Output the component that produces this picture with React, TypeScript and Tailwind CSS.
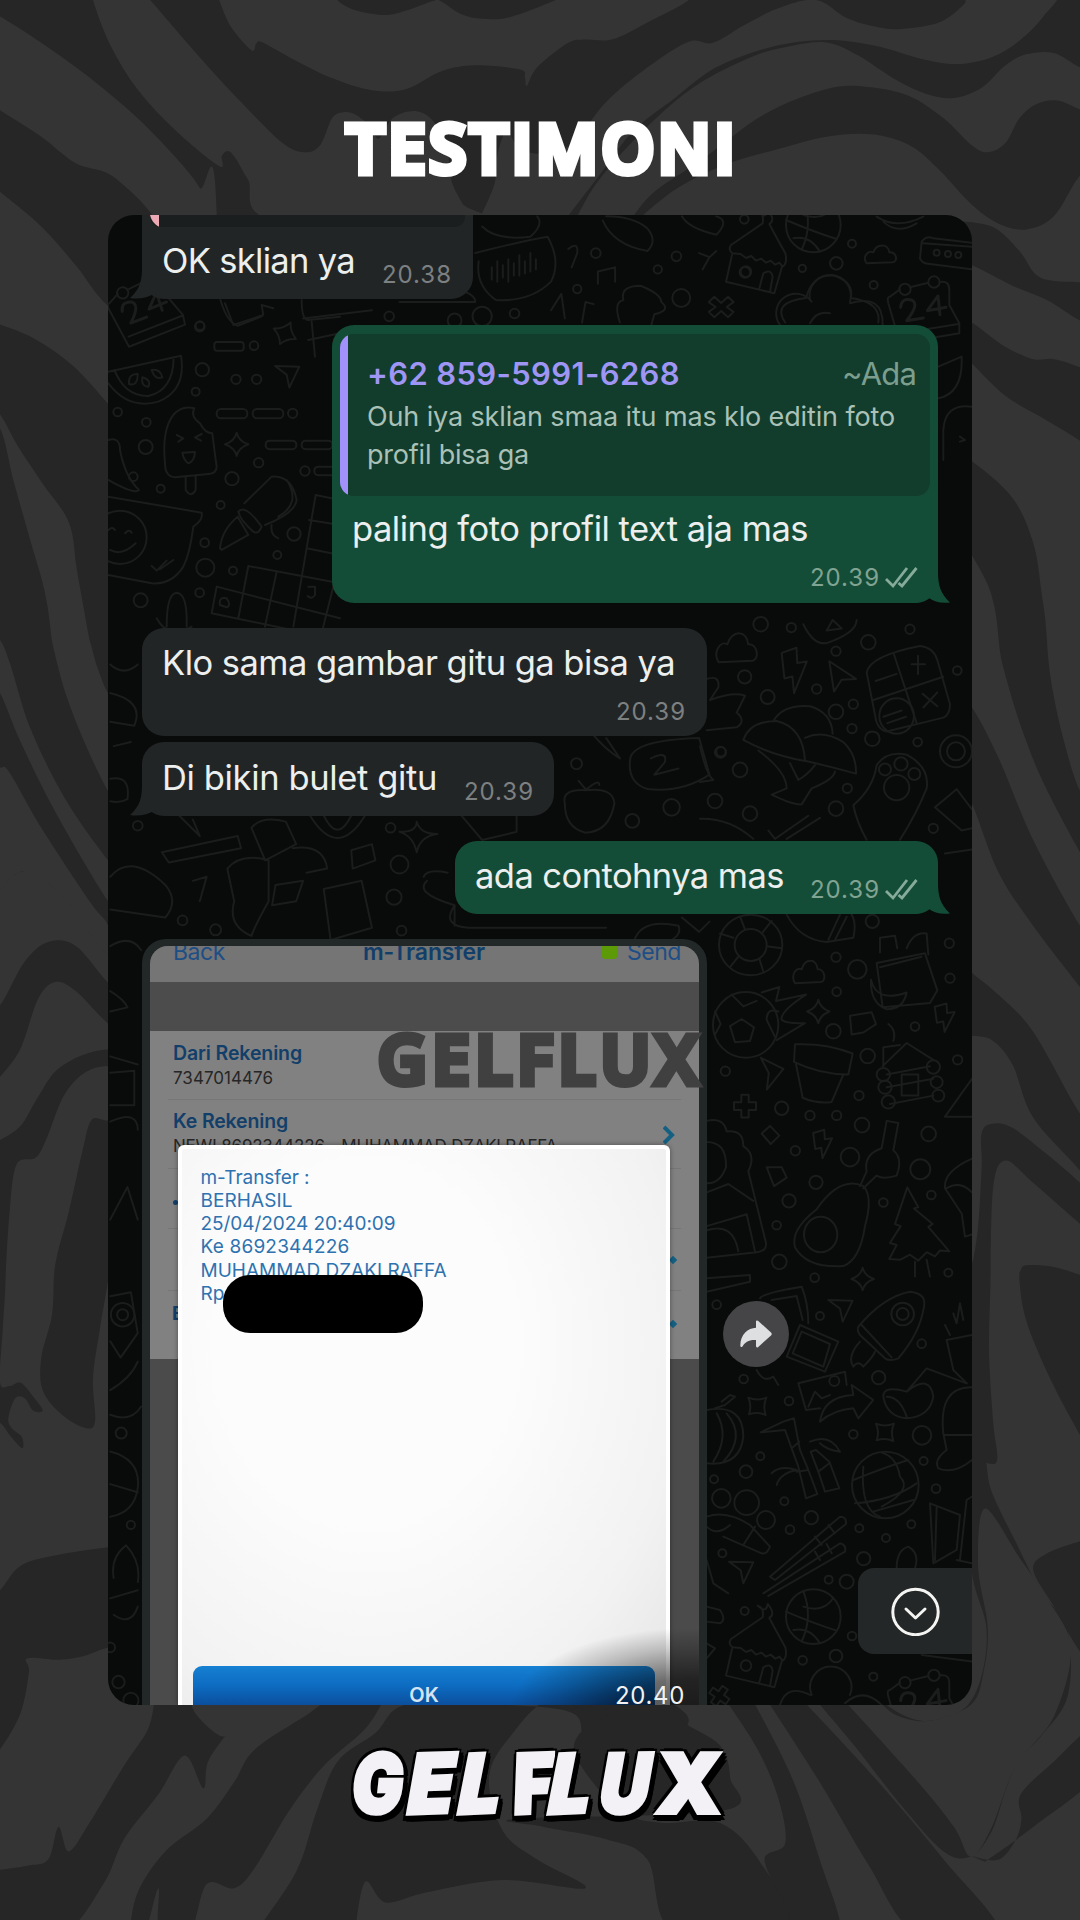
import { useLayoutEffect, useRef, type ReactNode } from "react";

type Pt = [number, number];

/* Closed or open smooth curve through a flat list of coordinates. */
function curve(flat: number[], close = true): string {
  const p: Pt[] = [];
  for (let i = 0; i < flat.length; i += 2) p.push([flat[i], flat[i + 1]]);
  const n = p.length;
  let d = `M${p[0][0]} ${p[0][1]}`;
  for (let i = 0; i < n - 1; i++) {
    const a = p[Math.max(0, i - 1)];
    const b = p[i];
    const c = p[i + 1];
    const e = p[Math.min(n - 1, i + 2)];
    d += `C${b[0] + (c[0] - a[0]) / 6} ${b[1] + (c[1] - a[1]) / 6} ${c[0] - (e[0] - b[0]) / 6} ${c[1] - (e[1] - b[1]) / 6} ${c[0]} ${c[1]}`;
  }
  return close ? d + "Z" : d;
}

const LIGHT = "#343434";
const DARK = "#262626";

const topWaves: [string, number[]][] = [
  [LIGHT, [-30, 10, 0, 40, 60, 105, 130, 190, 200, 290, 260, 395, 290, 460, 315, 540, 315, 2000, -30, 2000]],
  [LIGHT, [135, -30, 135, 0, 160, 110, 200, 220, 255, 320, 318, 407, 322, 382, 331, 370, 342, 388, 360, 440, 400, 540, 690, 540, 672, 500, 655, 440, 648, 350, 625, 290, 600, 272, 570, 290, 550, 340, 538, 310, 515, 280, 498, 275, 482, 290, 465, 355, 442, 373, 410, 350, 350, 250, 290, 140, 218, 0, 200, -30]],
  [LIGHT, [310, -30, 318, 0, 335, 65, 365, 123, 372, 107, 380, 103, 420, 140, 480, 190, 540, 221, 590, 218, 640, 175, 690, 160, 755, 170, 762, 190, 765, 210, 780, 165, 825, 105, 850, 97, 890, 96, 940, 55, 1000, 0, 1000, -30]],
  [DARK, [480, -20, 495, 8, 520, 27, 560, 37, 590, 26, 630, 2, 640, 3, 670, 35, 700, 46, 740, 42, 800, 5, 830, -20]],
  [LIGHT, [695, 540, 718, 450, 722, 380, 735, 320, 748, 350, 768, 373, 800, 374, 835, 345, 880, 250, 940, 165, 1000, 102, 1035, 105, 1080, 62, 1130, 20, 1185, 0, 1230, 45, 1275, 67, 1310, 71, 1365, 54, 1400, 10, 1410, -20, 1530, -20, 1515, 40, 1480, 100, 1440, 140, 1390, 157, 1340, 145, 1270, 112, 1200, 98, 1120, 115, 1040, 165, 980, 240, 920, 320, 870, 430, 820, 540]],
  [LIGHT, [835, 540, 870, 440, 940, 310, 1010, 210, 1090, 140, 1150, 112, 1200, 104, 1245, 135, 1300, 195, 1345, 230, 1385, 240, 1425, 215, 1460, 160, 1490, 133, 1530, 130, 1568, 165, 1600, 180, 1600, 290, 1568, 268, 1535, 246, 1505, 255, 1480, 290, 1460, 350, 1435, 373, 1410, 355, 1370, 290, 1320, 235, 1260, 213, 1200, 218, 1110, 280, 1020, 390, 950, 470, 915, 540]],
  [LIGHT, [925, 540, 980, 465, 1050, 405, 1130, 365, 1200, 335, 1265, 329, 1320, 355, 1360, 410, 1410, 500, 1450, 548, 1490, 562, 1530, 530, 1568, 430, 1600, 400, 1600, 2000, 925, 2000]],
  [DARK, [1380, 540, 1440, 555, 1480, 615, 1510, 680, 1568, 692, 1600, 700, 1600, 800, 1568, 785, 1520, 735, 1470, 700, 1411, 650, 1380, 640]],
  [DARK, [1380, 760, 1411, 790, 1460, 850, 1500, 880, 1530, 880, 1568, 900, 1600, 930, 1600, 1130, 1568, 1080, 1520, 1030, 1460, 970, 1411, 890]],
  [DARK, [1380, 1110, 1411, 1130, 1470, 1220, 1500, 1330, 1512, 1450, 1520, 1568, 1524, 1800, 1455, 1800, 1450, 1568, 1438, 1450, 1411, 1360]],
  [DARK, [-30, 240, 0, 270, 60, 335, 110, 400, 170, 440, 240, 590, 240, 850, 157, 750, 110, 650, 60, 555, 0, 470, -30, 430]],
  [DARK, [-30, 780, 0, 795, 50, 830, 105, 895, 157, 990, 200, 1080, 200, 1700, 145, 1700, 130, 1568, 112, 1400, 100, 1280, 60, 1180, 25, 1090, 0, 1015, -30, 960]],
  [DARK, [-30, 1030, 0, 1050, 20, 1180, 45, 1330, 65, 1450, 75, 1568, 80, 1700, -30, 1700]],
];

const midWaves: [string, number[]][] = [
  [DARK, [120, -40, 130, 0, 142, 70, 160, 140, 200, 230, 200, -40]],
  [DARK, [-20, -40, 72, -40, 75, 0, 95, 130, 125, 260, 160, 380, 200, 480, 200, 620, 157, 540, 95, 390, 45, 220, 15, 60, 0, 0, -20, -20]],
  [DARK, [-20, 100, 0, 130, 30, 250, 80, 420, 157, 640, 200, 720, 200, 870, 157, 765, 100, 640, 60, 575, 35, 566, 10, 590, -20, 660]],
  [LIGHT, [-20, 300, 0, 312, 14, 325, 60, 460, 130, 640, 157, 700, 157, 770, 100, 650, 60, 580, 35, 566, 14, 585, 0, 615, -20, 650]],
  [DARK, [-20, 890, 0, 895, 35, 790, 70, 740, 110, 750, 157, 840, 200, 900, 200, 990, 157, 940, 110, 860, 80, 838, 55, 880, 30, 1000, 0, 1070, -20, 1100]],
  [DARK, [-20, 1240, 0, 1225, 30, 1190, 55, 1120, 85, 1050, 137, 1008, 200, 1005, 200, 1040, 135, 1050, 95, 1110, 68, 1220, 52, 1268, 24, 1285, 14, 1400, 8, 1568, 8, 1700, -20, 1700]],
  [DARK, [200, 1180, 157, 1178, 133, 1176, 120, 1250, 100, 1400, 84, 1500, 78, 1568, 76, 1700, 200, 1700]],
  [DARK, [1446, -200, 1450, 0, 1462, 100, 1484, 220, 1515, 350, 1568, 520, 1600, 600, 1600, 440, 1568, 370, 1545, 250, 1528, 120, 1520, 0, 1518, -200]],
  [DARK, [1390, 140, 1411, 165, 1450, 290, 1500, 490, 1568, 700, 1600, 760, 1600, 920, 1568, 850, 1500, 700, 1450, 570, 1411, 400, 1390, 350]],
  [DARK, [1390, 780, 1411, 815, 1450, 870, 1500, 960, 1568, 1160, 1600, 1200, 1600, 1380, 1568, 1300, 1500, 1170, 1470, 1040, 1440, 980, 1411, 970]],
  [DARK, [1380, 1700, 1415, 1500, 1425, 1300, 1425, 1210, 1440, 1185, 1470, 1195, 1520, 1260, 1568, 1330, 1600, 1390, 1600, 1470, 1568, 1430, 1500, 1330, 1460, 1275, 1442, 1340, 1438, 1568, 1438, 1700]],
  [DARK, [1482, 1700, 1480, 1568, 1482, 1545, 1490, 1532, 1530, 1536, 1568, 1555, 1600, 1570, 1600, 1700]],
];

const bottomWaves: [string, number[]][] = [
  [DARK, [79, -150, 78, 0, 75, 90, 60, 190, 62, 270, 90, 330, 125, 363, 138, 345, 135, 240, 145, 120, 157, 0, 170, -150]],
  [DARK, [-20, -150, 8, -150, 8, 0, 4, 120, 0, 250, 14, 260, 30, 252, 50, 290, 62, 320, 48, 320, 36, 290, 22, 290, 12, 340, 18, 365, 32, 385, 32, 412, 14, 380, 0, 350, -20, 350]],
  [DARK, [-20, 780, 0, 760, 30, 700, 80, 675, 157, 655, 200, 650, 200, 850, 140, 910, 90, 930, 40, 927, 42, 960, 30, 1060, 0, 1150, -20, 1180]],
  [DARK, [225, 1020, 215, 1100, 180, 1190, 130, 1330, 100, 1400, 85, 1340, 70, 1420, 40, 1435, 0, 1445, -20, 1450, -20, 1600, 90, 1600, 150, 1480, 180, 1370, 230, 1260, 268, 1165, 295, 1245, 302, 1180, 330, 1110, 365, 1030]],
  [LIGHT, [275, 1020, 285, 1065, 322, 1118, 345, 1090, 368, 1020]],
  [DARK, [480, 1020, 450, 1060, 370, 1150, 340, 1230, 300, 1320, 240, 1400, 200, 1500, 190, 1600, 210, 1600, 230, 1490, 232, 1600, 275, 1600, 300, 1480, 340, 1490, 370, 1440, 420, 1300, 470, 1190, 530, 1100, 560, 1020]],
  [DARK, [370, 1600, 430, 1450, 460, 1300, 490, 1180, 545, 1110, 590, 1040, 720, 1040, 830, 1060, 850, 1130, 900, 1190, 960, 1150, 1000, 1080, 970, 1030, 960, 1020, 810, 1020, 740, 1120, 710, 1220, 730, 1350, 780, 1420, 850, 1490, 730, 1470, 620, 1500, 560, 1525, 530, 1475, 515, 1600]],
  [DARK, [810, 1020, 850, 1055, 890, 1055, 840, 1115, 840, 1180, 900, 1300, 960, 1330, 1045, 1330, 1105, 1430, 1150, 1600, 980, 1600, 940, 1420, 880, 1370, 790, 1340, 750, 1320, 1050, 1300, 1060, 1220, 1045, 1140, 990, 1080, 970, 1020]],
  [DARK, [1050, 1020, 1100, 1150, 1130, 1270, 1140, 1380, 1110, 1420, 1140, 1530, 1160, 1600, 1220, 1600, 1190, 1420, 1150, 1220, 1090, 1020]],
  [DARK, [1110, 1020, 1190, 1230, 1260, 1430, 1330, 1600, 1450, 1600, 1370, 1420, 1270, 1220, 1160, 1020]],
  [DARK, [1180, 1020, 1240, 1140, 1310, 1290, 1370, 1400, 1410, 1412, 1440, 1350, 1460, 1250, 1480, 1170, 1510, 1120, 1550, 1020, 1550, 860, 1510, 760, 1480, 660, 1440, 520, 1430, 440, 1410, 420, 1410, 700, 1432, 850, 1425, 970, 1400, 1050, 1350, 1080, 1310, 1065, 1270, 1020]],
  [LIGHT, [1220, 1020, 1330, 1225, 1385, 1340, 1410, 1413, 1440, 1340, 1475, 1190, 1530, 1070, 1555, 900, 1520, 780, 1480, 680, 1430, 560, 1420, 700, 1434, 850, 1428, 960, 1410, 1040, 1350, 1080, 1300, 1065, 1270, 1020]],
  [DARK, [1411, 1412, 1450, 1420, 1475, 1370, 1483, 1320, 1482, 1260, 1530, 1180, 1600, 1080, 1600, 1200, 1500, 1340, 1430, 1425]],
  [DARK, [1478, -150, 1480, 0, 1492, 110, 1530, 260, 1568, 380, 1600, 480, 1600, -150]],
  [DARK, [1380, -150, 1438, -150, 1438, 0, 1436, 180, 1442, 350, 1447, 445, 1420, 440, 1411, 430]],
  [DARK, [1568, 640, 1520, 670, 1500, 710, 1530, 800, 1568, 910, 1600, 960, 1600, 620]],
];

function Waves() {
  return (
    <svg className="absolute inset-0 h-[1920px] w-[1080px]" viewBox="0 0 1080 1920" aria-hidden="true">
      <rect width="1080" height="1920" fill={DARK} />
      <rect y="640" width="1080" height="1280" fill={LIGHT} />
      {[
        { w: topWaves, y: 0 },
        { w: midWaves, y: 640 },
        { w: bottomWaves, y: 1280 },
      ].map(({ w, y }) => (
        <svg key={y} y={y} width="1080" height="640" viewBox="0 0 1568 1568" preserveAspectRatio="none">
          {w.map(([fill, pts], i) => (
            <path key={i} d={curve(pts)} fill={fill} />
          ))}
        </svg>
      ))}
    </svg>
  );
}

function Dots({ list }: { list: [number, number, number][] }) {
  return (
    <>
      {list.map(([x, y, r], i) => (
        <circle key={i} cx={x} cy={y} r={r} />
      ))}
    </>
  );
}

/* Dots for a group that is stretched vertically; keeps them round on screen. */
function RoundDots({ list, ratio }: { list: [number, number, number][]; ratio: number }) {
  return (
    <>
      {list.map(([x, y, r], i) => (
        <ellipse key={i} cx={x} cy={y} rx={r} ry={r * ratio} />
      ))}
    </>
  );
}

const star = "M0-28Q5-8 28 0Q5 8 0 28Q-5 8-28 0Q-5-8 0-28Z";
const spark = "M-27-25Q0-14 27-25Q16 0 25 27Q0 16-25 25Q-16 0-27-25Z";
const plane = "M-35-30L38-28L8 35L0-4Z";
const cloud = "M-40 25C-55 5-35-15-20-8C-10-35 25-35 28-8C50-10 55 20 38 22Z";
const bolt = "M-25-35L12-45L14-15L38-18L6 45L2 12L-18 16Z";
const cross = "M-10-30H10V-10H30V10H10V30H-10V10H-30V-10H-10Z";

function House() {
  return (
    <g>
      <path d="M-70-20Q-85-30-75-45L20-110Q25-140 5-145Q30-120 35-150Q60-120 40-108Q60-70 88-20Q95 10 80 20L70 8L58 14L44 2L30 8L16-4L0 2L-14-12L-30-6L-46-18Z" />
      <path d="M-72-15L-90 65L55 100L78 20M10 85L22 40Q45 25 50 50L42 96" />
      <circle cx="-30" cy="35" r="16" />
    </g>
  );
}

function Ball() {
  return (
    <g>
      <circle r="82" />
      <path d="M-82-15Q0 20 70 42M-30-76Q0 0-35 74M-30-30Q30-10 60-56M-60 40Q-10 30 20 80" />
    </g>
  );
}

function Calendar() {
  return (
    <g>
      <path d="M-90-40L-60-62M-30-68L25-82M62-84Q88-88 88-60V-15L118 40V70L-60 100L-95-20Q-100-40-90-40M-55 70L115 42" />
      <circle cx="-45" cy="-62" r="17" />
      <circle cx="42" cy="-84" r="17" />
      <path d="M-58-8Q-55-38-25-30Q0-18-40 32L10 24M60 14L54-42L22 2L78-8" strokeWidth="3" />
    </g>
  );
}

function Wallpaper() {
  return (
    <svg
      className="absolute inset-0 h-full w-full [&_circle]:[vector-effect:non-scaling-stroke] [&_ellipse]:[vector-effect:non-scaling-stroke] [&_path]:[vector-effect:non-scaling-stroke] [&_rect]:[vector-effect:non-scaling-stroke]"
      viewBox="108 215 864 1490"
      fill="none"
      stroke="#1b1c1c"
      strokeWidth="2"
      strokeLinejoin="round"
      strokeLinecap="round"
      aria-hidden="true"
    >
      {/* left column beside the quoted reply */}
      <g transform="translate(105 290) scale(.3333)">
        <g transform="translate(110 60) rotate(-12)"><Calendar /></g>
        <path d="M10 245L228 197Q245 300 160 335Q70 360 10 280M28 240Q60 320 130 318Q205 300 206 203M72 282Q70 250 98 252Q98 290 72 282M112 262Q140 270 130 290Q108 290 112 262M140 240Q165 235 172 262Q150 270 140 240" />
        <path d="M180 520Q170 420 205 375Q230 345 268 355Q255 380 285 400Q300 430 322 430Q328 480 335 530Q335 550 310 552L210 562Q180 560 180 520M242 560V600Q258 625 272 600V555M215 435L235 445L220 455M290 432L270 442L288 452M232 488L270 486Q268 515 250 520Q235 510 232 488" />
        <path d="M10 620L290 668Q295 690 265 710Q255 790 235 830Q200 885 140 880L10 855M140 828L155 842L185 812M165 838L205 810" />
        <path d="M10 450Q45 440 45 480Q60 560 102 600Q90 615 10 570" />
        <circle cx="45" cy="742" r="80" />
        <path d="M10 720Q22 708 30 720M60 730Q72 715 80 728M15 780Q50 800 92 760" />
        <path d="M345 775Q350 720 398 680L430 735L350 780ZM400 665Q420 640 470 710Q460 735 445 725Q405 690 400 665M418 640L500 560Q560 555 575 630Q570 670 480 705M545 570Q590 640 520 680M500 705Q495 735 520 745" />
        <rect x="328" y="156" width="88" height="26" rx="8" />
        <rect x="335" y="357" width="92" height="28" rx="13" />
        <rect x="443" y="357" width="92" height="28" rx="13" />
        <rect x="482" y="452" width="92" height="26" rx="12" />
        <rect x="590" y="452" width="92" height="26" rx="12" />
        <rect x="628" y="530" width="80" height="26" rx="12" />
        <path d="M360 40L385 105L475 75L470 45L505 55M590 30Q590 90 610 90L705 80M620 95L630 200M610 150L705 130" />
        <path d="M335 890L705 985M320 970L705 1050M430 828L705 880M335 890L320 970M430 828L400 985M515 845L480 1010M632 615L565 1010M632 615L705 630M612 690L705 705M605 775L705 795M690 870L650 1030" />
        <path d="M345 945Q340 920 365 925Q380 945 365 952ZM610 890H630V915Q620 930 608 918" />
        <path d="M185 1010Q185 910 215 908Q248 910 245 1010M155 985Q190 1050 260 1010" />
        <path d={star} transform="translate(395 463) scale(1.25)" />
        <path d={spark} transform="translate(540 130) rotate(-20)" />
        <path d={plane} transform="translate(545 258)" />
        <Dots list={[[285, 107, 13], [447, 167, 13], [292, 239, 20], [393, 268, 14], [455, 268, 14], [272, 305, 12], [38, 366, 13], [124, 397, 13], [122, 471, 21], [563, 370, 14], [461, 518, 14], [381, 566, 20], [167, 596, 12], [600, 543, 14], [347, 645, 12], [567, 732, 20], [299, 758, 13], [517, 795, 12], [301, 833, 27], [384, 842, 12], [107, 931, 21], [284, 908, 13], [85, 560, 13]]} />
      </g>
      {/* top strip */}
      <g transform="translate(730 210) scale(.3333)">
        <g transform="translate(78 150)"><House /></g>
        <g transform="translate(250 45)"><Ball /></g>
        <g transform="translate(570 300)"><Calendar /></g>
        <path d={cloud} transform="translate(450 135)" />
        <path d="M575 95Q590 75 610 85L725 98M575 95L570 145Q575 160 600 162L725 178M580 100L725 110" />
        <path d="M240 270A62 62 0 1 1 360 275M245 275A58 58 0 0 0 150 345M360 280Q460 250 458 345M240 340Q260 300 300 310" />
        <path d="M440 20Q500 60 580 20M460 35Q500 75 560 40" />
        <path d="M625 470L695 440Q700 550 625 565M725 590Q645 580 640 660V750M690 680L705 690L690 695" />
        <Dots list={[[45, 187, 16], [366, 101, 12], [217, 175, 11], [319, 160, 19], [431, 225, 12], [43, 28, 13], [620, 128, 9], [654, 132, 9], [685, 135, 9]]} />
      </g>
      <g transform="scale(.6888 .4082)">
        <path d="M690 620Q760 590 795 580Q815 640 800 690Q770 740 720 735Q690 700 695 640M714 655V685M722 640V690M730 650V680M738 635V690M746 645V675M754 625V675M762 640V670M770 620V665M778 635V660M700 555Q720 590 770 580Q790 550 780 530M875 540Q890 600 940 615Q955 590 940 560Q920 530 880 530M990 530Q1000 560 1040 575Q1060 540 1040 530M825 610Q840 590 838 620L830 655M868 695V665L893 655V690M1015 620L1030 630L1040 615M1030 630L1020 660M800 760L815 720L820 780M845 790L850 740L862 745M900 790Q890 740 905 735Q900 700 930 700Q960 720 960 740Q975 760 950 770L945 800M580 740L690 740Q690 720 665 710M1140 790Q1120 740 1170 730Q1180 670 1210 675Q1240 690 1235 730Q1280 740 1275 790M320 735Q330 790 345 798L380 775M440 780L540 760" />
        <path d="M-10-25L0-10L10-25L18-12L8 0L18 12L10 25L0 10L-10 25L-18 12L-8 0L-18-12Z" transform="translate(1047 752)" />
        <RoundDots ratio={1.69} list={[[865, 620, 7], [982, 628, 7], [955, 660, 6], [838, 708, 6], [989, 730, 13], [747, 768, 7], [565, 775, 7], [660, 785, 10], [700, 775, 14], [290, 800, 7]]} />
      </g>
      {/* right column, middle */}
      <g transform="translate(700 620) scale(.3333 .4209)">
        <path d={cloud} transform="translate(108 68) scale(1.3)" />
        <path d={bolt} transform="translate(275 120) scale(1.2)" />
        <path d="M388 98L468 140L425 142L402 170Z" />
        <path d="M500 125Q510 85 660 62Q700 65 712 95L750 200Q750 225 730 232L560 265Q530 260 525 225ZM582 82L650 245M520 190L730 135M527 145L590 128M635 105H675M654 85V128M668 175L712 205M712 172L670 208M550 230L605 215M562 245L618 230" />
        <ellipse cx="590" cy="228" rx="52" ry="42" />
        <path d="M130 285Q150 240 230 240Q310 255 315 335Q210 320 130 285M220 240Q250 200 330 205Q395 220 398 270M315 280Q370 260 430 290Q470 320 468 365Q400 350 318 335M175 310Q260 360 260 400L215 415Q280 440 305 438L335 400Q400 380 405 360M270 340L295 380Q320 370 345 345M310 10Q340 60 380 55Q470 30 470 0M380 25L398 0L425 20Z" />
        <path d="M460 440Q520 400 530 345Q560 310 620 320Q690 350 680 400Q650 460 600 522M460 440Q470 480 500 522" />
        <RoundDots ratio={0.79} list={[[555, 355, 18], [603, 342, 20], [643, 366, 18], [590, 398, 38], [768, 312, 48], [768, 312, 27], [134, 135, 20], [203, 183, 21], [120, 356, 22], [45, 430, 22], [150, 460, 22], [408, 218, 22], [517, 282, 22], [408, 448, 22], [505, 53, 22], [182, 10, 22], [472, 830, 28], [400, 977, 22], [503, 1036, 22], [245, 1160, 20], [486, 1200, 22], [450, 1276, 28], [348, 1336, 20], [267, 1380, 20], [686, 1221, 22], [661, 1305, 30], [238, 1525, 22], [517, 716, 20], [63, 313, 14], [442, 400, 14], [700, 495, 14], [653, 290, 13], [350, 164, 14], [460, 200, 14], [408, 74, 14], [772, 120, 13], [630, 22, 14], [274, 18, 14], [410, 883, 13], [645, 966, 13], [750, 851, 14], [76, 1072, 14], [477, 1130, 14], [330, 1177, 14], [410, 1177, 14], [286, 1261, 14], [230, 1438, 13], [550, 1384, 13], [694, 1366, 13], [773, 1045, 14], [748, 768, 14], [456, 258, 14], [408, 801, 14]]} />
        <path d="M20 140Q60 130 55 160L30 190Q100 170 135 180L110 220Q140 240 110 255L20 262M0 300Q20 370 40 380L0 385M0 472Q90 470 160 520M205 500L225 520L325 465M260 520L360 470M705 445L770 402L816 450M705 445L785 500L816 495M735 555L816 545" />
        <ellipse cx="152" cy="772" rx="95" ry="72" />
        <ellipse cx="152" cy="772" rx="48" ry="38" />
        <path d="M60 745L100 755M90 825L115 800M190 835L178 805M245 780L200 775M215 715L185 745M120 705L135 735" />
        <path d={cloud} transform="translate(325 838)" />
        <path d={star} transform="translate(355 930) scale(1.2 1)" />
        <ellipse cx="137" cy="962" rx="98" ry="78" />
        <path d="M90 965L125 948L162 968L150 1000L105 1003ZM95 890L130 918L170 905M45 930L62 960L45 985M235 930Q200 920 200 950L225 990M185 885L238 872L228 905L318 890Q240 930 245 950Q260 960 315 958L230 998" />
        <path d="M530 815L675 792L712 880L690 910L548 920ZM540 790V755L585 750L592 780M620 780Q640 740 680 745L685 795M513 855Q530 910 620 885Q610 925 560 925Q510 910 513 855M540 825L665 800" />
        <path d="M285 1008Q380 1005 458 1030L445 1080Q360 1080 282 1050ZM288 1055L308 1135Q350 1150 395 1145L430 1080" />
        <path d={bolt} transform="translate(728 945) scale(.95 .75)" />
        <path d={plane} transform="translate(205 1080) rotate(20)" />
        <path d={cross} transform="translate(135 1155) scale(1.1 .9)" />
        <path d={bolt} transform="translate(362 1245) scale(.9 .75)" />
        <path d="M450 940L515 932L528 960L490 980L455 985ZM565 960Q590 975 580 1000M185 1220L210 1202L238 1225L212 1245ZM200 1300L245 1300L260 1325L222 1345Z" />
        <path d="M548 1060L620 1005L700 1045M550 1060V1015L600 1010M560 1080L690 1060M560 1110L700 1090M570 1150L700 1130M605 1080H655V1130H605Z" />
        <RoundDots ratio={0.79} list={[[550, 1080, 20], [555, 1110, 20], [565, 1145, 20], [700, 1062, 20], [710, 1098, 18], [715, 1130, 18]]} />
        <path d="M735 1180L816 1090M735 1180H816M560 1190L595 1195L580 1260M560 1190L545 1255M545 1255Q490 1270 500 1310L480 1345M580 1260Q610 1280 590 1320Q550 1330 530 1320L490 1350" />
        <path d="M490 1345Q420 1320 350 1400Q270 1450 285 1490Q320 1540 430 1535Q480 1520 495 1440Q520 1370 490 1345" />
        <ellipse cx="362" cy="1460" rx="50" ry="42" />
        <path d="M622 1348L655 1395L642 1398L698 1435L685 1442L748 1500L720 1498L705 1512L680 1502L655 1522L630 1508L600 1520L568 1518L590 1485L570 1480L602 1440L585 1435Z M645 1525V1560M680 1520L690 1560" />
        <path d="M20 1190Q70 1180 80 1215Q130 1210 130 1250Q170 1270 145 1310L198 1480Q200 1500 170 1502L20 1515M20 1360L85 1340L160 1380M20 1440L140 1412L165 1500M20 1450Q100 1430 115 1500M20 1240Q80 1240 78 1300Q60 1340 20 1338" />
        <path d="M816 1280Q730 1310 735 1350L785 1410L795 1465L816 1460M740 1350Q780 1330 816 1360M260 700Q300 760 380 765L460 755Q470 720 455 700M385 760L420 700M405 760L440 705" />
      </g>
      {/* right column, bottom */}
      <g transform="translate(700 1270) scale(.3333)">
        <path d="M20 25L150 15V35L20 65M180 85Q185 70 305 50Q325 100 325 160M215 90L290 78L308 150M300 165L415 215L375 305L260 260ZM305 185L390 222L370 290L278 250Z" />
        <path d={plane} transform="translate(420 120)" />
        <path d={star} transform="translate(488 27) scale(1.2)" />
        <path d="M475 170Q550 80 630 65Q680 70 672 110Q660 190 595 265Q570 275 555 265L480 195Q470 180 475 170M485 165L575 262M480 215Q440 260 460 290Q475 270 490 290Q520 260 525 245" />
        <Dots list={[[608, 132, 34], [608, 132, 18], [344, 23, 13], [50, 104, 13], [360, 138, 12], [665, 221, 13], [536, 323, 20], [131, 327, 13], [403, 333, 15], [267, 393, 13], [460, 493, 13], [666, 496, 28], [181, 559, 12], [138, 605, 19], [42, 628, 12], [671, 573, 12], [708, 656, 13], [253, 694, 12], [334, 743, 20], [270, 779, 13], [478, 775, 12], [634, 763, 12], [558, 804, 12], [67, 850, 12], [491, 866, 20], [386, 929, 12], [440, 935, 21], [134, 1023, 12], [456, 1098, 13], [408, 1158, 19], [308, 1171, 13], [520, 1220, 12], [64, 685, 28], [140, 698, 37], [198, 750, 27], [745, 8, 12]]} />
        <path d="M740 210L815 195M740 210L760 300L800 340M735 165L750 195M760 130L770 160L780 100L790 150M170 300Q190 340 220 320L235 345M295 340L435 305L440 345M295 340L318 420L360 415M325 410L345 365L365 385L390 375" />
        <path d="M360 455Q370 380 460 375L455 345L520 390L475 445L460 415Q400 420 360 455M550 380Q550 345 620 365L680 295L800 340M620 365Q690 310 700 380Q690 440 620 445Q560 440 550 380M560 380Q600 380 620 440M730 490Q715 350 816 352M730 490L740 540Q700 570 715 595Q760 615 816 570M735 495H816" />
        <path d={spark} transform="translate(172 408)" />
        <path d={spark} transform="translate(555 486)" />
        <path d="M20 420Q130 400 130 500Q120 590 20 580M45 415L75 405L105 380L90 375L65 395M50 430Q90 500 40 575M80 430Q140 500 70 575" />
        <path d="M182 487L250 455L282 445L300 540L325 600L352 672L318 685L295 590L275 535L255 480ZM275 535L298 515M290 605L325 600M332 545L348 540L388 575L418 655L375 665L355 605ZM355 605L388 580M330 515Q390 490 420 545Q380 540 360 520M215 610Q240 585 290 600Q240 610 230 645" />
        <circle cx="556" cy="645" r="100" />
        <path d="M460 630Q560 590 625 570M465 700Q580 690 650 640M490 590Q480 720 540 740M545 548Q590 560 600 620Q640 660 545 710M520 725L640 690" />
        <path d="M20 740Q80 720 150 765L210 830Q200 855 185 850L70 800M20 770Q50 800 90 765M165 770L130 825" />
        <path d="M210 920L420 740Q440 740 438 762L225 930ZM190 970L420 820Q440 825 435 845L205 978M345 800L365 825M385 765L405 790M345 845L360 870M380 822L395 850" />
        <path d="M690 700L780 735L770 840L700 880ZM710 712L705 870M780 870L800 690L816 680M770 870L816 880M590 895Q590 840 625 830Q660 850 645 895" />
        <path d={plane} transform="translate(122 905)" />
        <path d="M20 870L40 940L85 970M20 1010L60 1020Q80 1050 60 1060L20 1055M20 1120L45 1135L20 1165" />
        <g transform="translate(340 1040)"><Ball /></g>
        <g transform="translate(168 1152)"><House /></g>
        <path d={cross} transform="translate(58 1278) rotate(35)" />
        <path d="M335 1275A62 62 0 1 1 450 1275M240 1305Q260 1240 330 1275M435 1300Q490 1250 545 1305M665 1155L816 1175" />
        <g transform="translate(660 1300)"><Calendar /></g>
      </g>
      {/* strip between the short messages, left edge and right of the video reply */}
      <g transform="translate(0 640) scale(.6888 .4082)">
        <path d="M915 290Q920 245 1015 240L1030 330Q990 375 940 365Q910 350 915 290M945 290Q970 270 965 300L950 330L985 315M820 400Q815 365 850 368Q890 360 892 400Q885 470 850 472Q820 460 820 400M850 365L840 345M852 365Q870 340 870 355" />
        <path d="M235 520L345 480L350 510L245 545ZM260 430L290 480L280 440M365 460Q380 430 415 445L430 500L385 540ZM450 430Q490 540 530 430M470 430Q490 500 510 430M580 470Q605 470 605 445Q610 475 635 475Q610 480 605 520Q600 480 580 470M330 560Q350 520 390 540V640Q370 700 365 725Q330 700 340 640ZM425 510Q470 500 475 560L445 570M400 600L440 590L430 640L395 650ZM470 610L525 590L540 705L480 735ZM510 515L540 500L545 540L512 560ZM280 590L300 580L290 640M615 580Q620 560 650 570M620 590Q600 620 660 650V700M660 650Q640 700 680 705H880M160 580Q190 520 240 600Q260 640 240 680L160 660M670 430L700 490L750 470V430" />
        <RoundDots ratio={1.69} list={[[837, 303, 8], [1046, 275, 8], [918, 443, 10], [975, 410, 12], [580, 550, 13], [572, 630, 11], [313, 710, 8], [265, 687, 7], [583, 712, 7], [567, 460, 7], [200, 455, 7]]} />
        <path d="M160 860Q180 880 185 900L160 910M160 1020L200 1040M160 1180Q200 1150 200 1200M160 1060L195 1055V1140H160M160 340Q190 330 185 390Q175 400 160 395M165 260L190 250M160 60Q180 90 200 60M160 130Q210 150 195 210L160 200M160 1420L185 1340L200 1420M160 750Q190 720 205 760" />
        <path d="M860 230Q880 270 900 290L880 240M920 740Q930 680 985 700Q990 720 975 735M990 680L1015 715L1030 690" />
      </g>
      <g transform="translate(0 1280) scale(.6888 .4082)">
        <RoundDots ratio={1.69} list={[[178, 85, 17], [178, 85, 8], [176, 375, 8], [190, 600, 6], [172, 985, 9], [190, 1030, 11], [160, 900, 7]]} />
        <path d="M160 40L190 30L200 130L175 190L160 150M160 270Q190 240 200 200M160 330Q190 350 205 310M160 420Q205 440 200 510Q195 570 160 580M160 500L200 520M165 730Q160 680 183 650Q205 690 200 740M160 780L200 760M165 820Q190 850 200 800" />
      </g>
    </svg>
  );
}

/* Text run whose letter spacing is adjusted so that it spans a set width. */
function Fit({ w, className = "", children }: { w: number; className?: string; children: string }) {
  const ref = useRef<HTMLSpanElement>(null);
  useLayoutEffect(() => {
    const el = ref.current;
    if (!el) return;
    el.style.letterSpacing = "0px";
    const natural = el.getBoundingClientRect().width;
    el.style.letterSpacing = `${(w - natural) / children.length}px`;
  }, [w, children]);
  return (
    <span ref={ref} className={`inline-block w-fit whitespace-pre ${className}`}>
      {children}
    </span>
  );
}

function Tail({ side }: { side: "left" | "right" }) {
  return side === "left" ? (
    <svg className="absolute bottom-0 -left-3 h-8 w-10 fill-[#222526]" viewBox="0 0 40 32">
      <path d="M12 0C12 14 10 22 0 31C8 32.500 18 31 25 26C28 30 36 32 40 32V0Z" />
    </svg>
  ) : (
    <svg className="absolute -right-3 bottom-0 h-8 w-10 fill-[#144d37]" viewBox="0 0 40 32">
      <path d="M28 0C28 14 30 22 40 31.500C31 32.500 24 31 19 27C14 31 8 32 0 32V0Z" />
    </svg>
  );
}

function Checks() {
  return (
    <svg className="h-[22px] w-[33px]" viewBox="0 0 33 22" fill="none" stroke="#86ab9a" strokeWidth="2.800">
      <path d="M1 12L8 19L22 1M13.500 16L17 19L31.500 1" />
    </svg>
  );
}

function Time({ children, out = false }: { children: string; out?: boolean }) {
  return (
    <span className={`flex items-center gap-[5px] text-[24px] leading-7 ${out ? "text-[#80a392]" : "text-[#7c8081]"}`}>
      <Fit w={70}>{children}</Fit>
      {out && <Checks />}
    </span>
  );
}

function Line({ w, children, className = "" }: { w: number; children: string; className?: string }) {
  return (
    <Fit w={w} className={`text-[34.500px] leading-10 ${className}`}>
      {children}
    </Fit>
  );
}

function ShortBubble({ className, children }: { className: string; children: ReactNode }) {
  return <div className={`relative flex items-end justify-between pb-[10px] ${className}`}>{children}</div>;
}

function Transfer() {
  return (
    <div className="ml-[34px] mt-[25px] h-[766px] w-[565px] rounded-t-[24px] bg-[#222727] px-2 pt-[7px]">
      <div className="relative flex h-[759px] flex-col overflow-hidden rounded-t-[18px] bg-[#4b4b4b] text-[#123f6a]">
        <div className="flex h-9 shrink-0 items-start bg-[#757575] pl-[23px] text-[23px] leading-7">
          <Fit w={52} className="-mt-[8px] text-[#1d4e86]">Back</Fit>
          <Fit w={122} className="-mt-[8px] ml-[138px] font-semibold">m-Transfer</Fit>
          <span className="ml-[117px] h-[13px] w-[15px] rounded-b-[3px] bg-[#5c9a08]" />
          <Fit w={54} className="-mt-[8px] ml-[10px] text-[#1d4e86]">Send</Fit>
        </div>
        <div className="h-[49px] shrink-0 bg-[#4c4c4c]" />
        <div className="h-[328px] shrink-0 bg-[#818181] pt-2">
          <div className="mx-[18px] flex h-[61px] flex-col border-b border-[#767676] pl-[5px]">
            <Fit w={129} className="mt-[2px] text-[19.500px] leading-6 font-semibold">Dari Rekening</Fit>
            <Fit w={100} className="mt-px text-[17px] leading-6 text-[#262626]">7347014476</Fit>
          </div>
          <div className="mx-[18px] flex h-[69px] items-start justify-between border-b border-[#767676] pl-[5px]">
            <span className="mt-[9px] flex flex-col">
              <Fit w={115} className="text-[19.500px] leading-6 font-semibold">Ke Rekening</Fit>
              <Fit w={384} className="mt-px text-[17px] leading-6 text-[#262626]">NEW! 8692344226 - MUHAMMAD DZAKI RAFFA</Fit>
            </span>
            <svg className="mt-[25px] mr-[6px] h-5 w-3" viewBox="0 0 12 20" fill="none" stroke="#146083" strokeWidth="4">
              <path d="M1 2L9 10L1 18" />
            </svg>
          </div>
          <div className="mx-[18px] flex h-[60px] items-center justify-between border-b border-[#767676] pl-[5px]">
            <span className="mt-2 size-[5px] rounded bg-[#123f6a]" />
          </div>
          <div className="mx-[18px] flex h-[62px] items-center justify-end border-b border-[#767676]">
            <span className="mr-[5px] size-[6px] rotate-45 bg-[#146083]" />
          </div>
          <div className="mx-[18px] flex h-[58px] items-center justify-between pl-[4px]">
            <span className="mb-3 text-[19px] font-bold">B</span>
            <span className="mt-2 mr-[5px] size-[6px] rotate-45 bg-[#146083]" />
          </div>
        </div>

        <div className="absolute top-[199px] left-7 flex h-[560px] w-[492px] flex-col rounded-t-[6px] border-4 border-b-0 border-white bg-[radial-gradient(ellipse_at_38%_35%,#fcfcfc_35%,#f2f2f2_75%,#e4e4e4_100%)] text-[19px] leading-[23.250px] text-[#2e72b0] shadow-[0_0_5px_#0006]">
          <div className="flex flex-col pt-[16.500px] pl-[18.500px]">
            <Fit w={109}>m-Transfer :</Fit>
            <Fit w={92}>BERHASIL</Fit>
            <Fit w={195}>25/04/2024 20:40:09</Fit>
            <Fit w={149}>Ke 8692344226</Fit>
            <Fit w={246}>MUHAMMAD DZAKI RAFFA</Fit>
            <Fit w={24}>Rp</Fit>
          </div>
          <div className="absolute top-[126px] left-[41px] h-[58px] w-[200px] rounded-[27px] bg-black" />
          <div className="mt-auto ml-[11px] flex h-[39px] w-[462px] justify-center overflow-hidden rounded-t-[9px] bg-linear-to-b from-[#1680d2] via-[#0d6cc1] to-[#0b4f9e] pt-[15px] text-[20px] leading-7 font-semibold text-[#d4e4f5]">
            OK
          </div>
        </div>
        <div className="absolute right-0 bottom-0 h-[160px] w-[320px] bg-[radial-gradient(180px_85px_at_97%_105%,#000a_0%,#0008_40%,#0003_75%,#0000_100%)]" />
        <Fit w={70} className="absolute right-[14px] -bottom-[5px] text-[24px] leading-7 text-[#f2f2f2]">20.40</Fit>
      </div>
    </div>
  );
}

const logo: { c: string; cls: string }[] = [
  { c: "G", cls: "left-[-5px] w-[56px] [transform:skewX(-6deg)_scaleX(0.82)]" },
  { c: "E", cls: "left-[54px] w-[50px] [transform:skewX(-12deg)_rotate(-2deg)_scaleX(0.9)]" },
  { c: "L", cls: "left-[105px] w-[46px] [transform:skewX(-14deg)_rotate(-3deg)_scaleX(0.88)]" },
  { c: "F", cls: "left-[157px] w-[46px] [transform:skewX(-4deg)_rotate(-2deg)_scaleX(0.84)]" },
  { c: "L", cls: "left-[195px] w-[46px] [transform:skewX(-14deg)_rotate(-3deg)_scaleX(0.88)]" },
  { c: "U", cls: "left-[243px] w-[60px] [transform:skewX(-11deg)_rotate(-1deg)_scaleX(0.84)]" },
  { c: "X", cls: "left-[304px] w-[60px] [transform:skewX(-4deg)_scaleX(1)]" },
];

export default function App() {
  return (
    <div className="relative h-[1920px] w-[1080px] overflow-hidden font-['Inter',sans-serif]">
      <Waves />
      <main className="relative flex flex-col items-center">
        <h1 className="flex h-[215px] w-full items-start justify-center pt-[102px] pl-[5px] font-['Open_Sans',sans-serif] text-[67px] leading-[90px] font-semibold text-white [paint-order:stroke_fill] [stroke-linejoin:round] [-webkit-text-stroke:7px_white]">
          <Fit w={392}>TESTIMONI</Fit>
        </h1>

        <section className="relative flex h-[1490px] w-[864px] flex-col overflow-hidden rounded-[26px] bg-[#090a0a] text-[#ecefee]">
          <Wallpaper />
          <div className="relative flex flex-col">
            <ShortBubble className="ml-[34px] h-[84px] w-[331px] rounded-b-[22px] bg-[#222526] pr-[21px] pl-[20px]">
              <Tail side="left" />
              <div className="absolute top-0 left-2 h-3 w-[315px] overflow-hidden rounded-b-[10px] bg-[#1b1e1e]">
                <svg className="h-3 w-[9px] fill-[#eda9b4]" viewBox="0 0 9 12">
                  <path d="M0 0H9V12C4 9 1 5 0 0Z" />
                </svg>
              </div>
              <Line w={193} className="relative mb-[8px]">OK sklian ya</Line>
              <Time>20.38</Time>
            </ShortBubble>

            <div className="relative mt-[26px] ml-[224px] flex h-[278px] w-[606px] flex-col rounded-[22px] bg-[#144d37]">
              <Tail side="right" />
              <div className="mx-2 mt-[9px] flex h-[162px] overflow-hidden rounded-[14px] bg-[#123c2c]">
                <span className="w-2 bg-[#a291fb]" />
                <div className="flex flex-1 flex-col pt-[22px] pr-[14px] pl-[19px]">
                  <div className="flex justify-between text-[31px] leading-9">
                    <Fit w={313} className="font-semibold text-[#9f95f5]">+62 859-5991-6268</Fit>
                    <Fit w={74} className="text-[#7c9e8e]">~Ada</Fit>
                  </div>
                  <Fit w={528} className="mt-[6px] text-[27px] leading-[38px] text-[#a9c1b6]">Ouh iya sklian smaa itu mas klo editin foto</Fit>
                  <Fit w={162} className="text-[27px] leading-[38px] text-[#a9c1b6]">profil bisa ga</Fit>
                </div>
              </div>
              <Line w={456} className="mt-[13px] ml-[20px]">paling foto profil text aja mas</Line>
              <div className="relative mt-auto mr-5 mb-[11px] flex justify-end">
                <Time out>20.39</Time>
              </div>
            </div>

            <div className="mt-[25px] ml-[34px] flex h-[108px] w-[565px] flex-col rounded-[22px] bg-[#222526] pt-[15px] pr-[21px] pb-[10px] pl-[20px]">
              <Line w={513}>Klo sama gambar gitu ga bisa ya</Line>
              <div className="mt-auto flex justify-end">
                <Time>20.39</Time>
              </div>
            </div>

            <ShortBubble className="mt-[6px] ml-[34px] h-[74px] w-[412px] rounded-[22px] bg-[#222526] pr-[20px] pl-[20px]">
              <Tail side="left" />
              <Line w={275} className="relative mb-[8px]">Di bikin bulet gitu</Line>
              <Time>20.39</Time>
            </ShortBubble>

            <ShortBubble className="mt-[25px] ml-[347px] h-[73px] w-[483px] rounded-[22px] bg-[#144d37] pr-5 pl-[20px]">
              <Tail side="right" />
              <Line w={309} className="relative mb-[8px]">ada contohnya mas</Line>
              <span className="relative">
                <Time out>20.39</Time>
              </span>
            </ShortBubble>

            <Transfer />
          </div>

          <Fit w={325} className="absolute top-[798px] left-[270px] font-['Open_Sans',sans-serif] text-[67px] leading-[90px] font-semibold text-[#404040] [paint-order:stroke_fill] [stroke-linejoin:round] [-webkit-text-stroke:7px_#404040]">GELFLUX</Fit>

          <div className="absolute top-[1086px] left-[615px] flex size-[66px] items-center justify-center rounded-full bg-[#454547]">
            <svg className="h-7 w-8 fill-[#dedfe1]" viewBox="0 0 32 28">
              <path d="M16 1.500Q16 0 18 .7L31 12.500Q32.500 14 31 15.500L18 27.200Q16 28 16 26V20C9 19.500 5 22 2.500 26.500Q.5 28 .3 25.500C.5 14 8 8 16 7.700Z" />
            </svg>
          </div>

          <div className="absolute top-[1353px] right-0 flex h-[86px] w-[114px] items-center justify-center rounded-l-[16px] bg-[#242727]">
            <svg className="size-[50px]" viewBox="0 0 50 50" fill="none" stroke="#f4f4f2" strokeWidth="3" strokeLinecap="round" strokeLinejoin="round">
              <circle cx="25.500" cy="26" r="22.700" />
              <path d="M16 23L25.500 32L35 23" />
            </svg>
          </div>
        </section>

        <div className="relative mt-[29px] h-[100px] w-[374px] text-[82px] leading-[100px] font-black text-[#f3f1f6]">
          {logo.map(({ c, cls }, i) => (
            <span
              key={i}
              className={`absolute top-0 text-center [text-shadow:-4px_-4px_0_#000,4px_-4px_0_#000,-4px_4px_0_#000,4px_4px_0_#000,0_-5px_0_#000,-5px_0_0_#000,7px_0_0_#000,8px_3px_0_#000,8px_7px_0_#000,4px_8px_0_#000,0_8px_0_#000,-4px_7px_0_#000] [-webkit-text-stroke:4px_#f3f1f6] ${cls}`}
            >
              {c}
            </span>
          ))}
        </div>
      </main>
    </div>
  );
}
